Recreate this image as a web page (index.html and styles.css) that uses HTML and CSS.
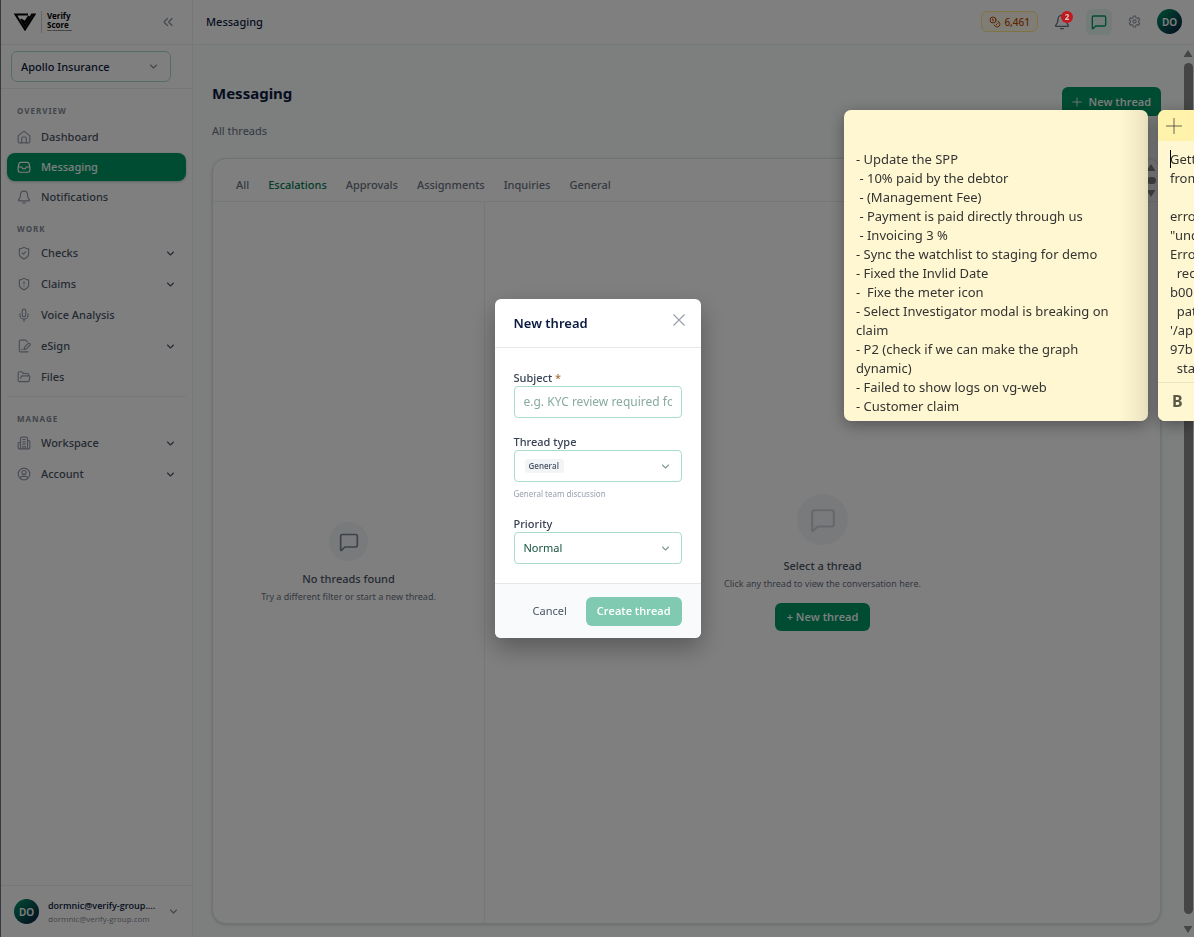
FILE: index.html
```
<!DOCTYPE html>
<html lang="en">
<head>
  <meta charset="UTF-8">
  <title>Messaging</title>
  <link rel="stylesheet" href="styles.css">
</head>
<body>
  <svg class="icon-defs" aria-hidden="true">
    <symbol id="i-down" viewBox="0 0 24 24"><path d="m4 8 8 8 8-8"/></symbol>
    <symbol id="i-chat" viewBox="0 0 24 24"><path d="M22 16a2 2 0 0 1-2 2H7l-4 4H2V5a2 2 0 0 1 2-2h16a2 2 0 0 1 2 2z"/></symbol>
    <symbol id="i-bell" viewBox="0 0 24 24"><path d="M6 8a6 6 0 0 1 12 0c0 6 2 7 3.500 9a1 1 0 0 1-.8 1.500H3.300A1 1 0 0 1 2.500 17C4 15 6 14 6 8M10 22h4"/></symbol>
    <symbol id="i-plus" viewBox="0 0 24 24"><path d="M12 2v20M2 12h20"/></symbol>
  </svg>

  <div class="app">
    <aside class="sidebar">
      <div class="brand">
        <svg class="brand-mark" viewBox="0 0 22 18"><path d="M14 1.500H1.500L11 16.500 20.500 1.500H18L11 12.500 7 6"/><path d="m8 7 3 2 4-6"/></svg>
        <div class="brand-name"><span>Verify</span><span>Score</span><small>Your Verification Partner</small></div>
        <button class="collapse" aria-label="Collapse sidebar"><svg class="icon" viewBox="0 0 24 24"><path d="m11 18-6-6 6-6M19 18l-6-6 6-6"/></svg></button>
      </div>

      <div class="org">
        <button class="org-select">Apollo Insurance <svg class="icon chev"><use href="#i-down"/></svg></button>
      </div>

      <nav class="nav">
        <div class="nav-group">
          <div class="nav-title">OVERVIEW</div>
          <a class="nav-item" href="#"><svg class="icon" viewBox="0 0 24 24"><path d="M2 10l10-8 10 8v10a2 2 0 0 1-2 2H4a2 2 0 0 1-2-2zM8 22v-8a2 2 0 0 1 2-2h4a2 2 0 0 1 2 2v8"/></svg>Dashboard</a>
          <a class="nav-item active" href="#"><svg class="icon" viewBox="0 0 24 24"><path d="M22 12h-6l-2 3h-4l-2-3H2M6 4h12a3 3 0 0 1 2.500 2L22 12v6a3 3 0 0 1-3 3H5a3 3 0 0 1-3-3v-6l1.500-6A3 3 0 0 1 6 4z"/></svg>Messaging</a>
          <a class="nav-item" href="#"><svg class="icon"><use href="#i-bell"/></svg>Notifications</a>
        </div>
        <div class="nav-group work">
          <div class="nav-title">WORK</div>
          <a class="nav-item" href="#"><svg class="icon" viewBox="0 0 24 24"><path d="M12 2c2.500 2 5 3 8 3v8c0 5-3.500 7.500-8 9-4.500-1.500-8-4-8-9V5c3 0 5.500-1 8-3zM9 12l2 2 4-4"/></svg>Checks <svg class="icon chev"><use href="#i-down"/></svg></a>
          <a class="nav-item" href="#"><svg class="icon" viewBox="0 0 24 24"><path d="M12 2c2.500 2 5 3 8 3v8c0 5-3.500 7.500-8 9-4.500-1.500-8-4-8-9V5c3 0 5.500-1 8-3zM12 8v4M12 16v.1"/></svg>Claims <svg class="icon chev"><use href="#i-down"/></svg></a>
          <a class="nav-item" href="#"><svg class="icon" viewBox="0 0 24 24"><rect x="9" y="2" width="6" height="13" rx="3"/><path d="M5 10v2a7 7 0 0 0 14 0v-2M12 19v4"/></svg>Voice Analysis</a>
          <a class="nav-item" href="#"><svg class="icon" viewBox="0 0 24 24"><path d="M18 5l-3-3H6a2 2 0 0 0-2 2v16a2 2 0 0 0 2 2h13M8 18h1M12 18l1-4 6-6a2 2 0 0 1 3 3l-6 6z"/></svg>eSign <svg class="icon chev"><use href="#i-down"/></svg></a>
          <a class="nav-item" href="#"><svg class="icon" viewBox="0 0 24 24"><path d="M6 14l1.500-3A2 2 0 0 1 9 10h12a2 2 0 0 1 1 2l-1 6a2 2 0 0 1-2 2H4a2 2 0 0 1-2-2V5a2 2 0 0 1 2-2h4l3 3h7a2 2 0 0 1 2 2v2"/></svg>Files</a>
        </div>
        <div class="nav-group manage">
          <div class="nav-title">MANAGE</div>
          <a class="nav-item" href="#"><svg class="icon" viewBox="0 0 24 24"><path d="M6 22V4a2 2 0 0 1 2-2h8a2 2 0 0 1 2 2v18zM6 11H4a2 2 0 0 0-2 2v7a2 2 0 0 0 2 2h2M18 8h2a2 2 0 0 1 2 2v10a2 2 0 0 1-2 2h-2M10 6h4M10 10h4M10 14h4M10 22v-4h4v4"/></svg>Workspace <svg class="icon chev"><use href="#i-down"/></svg></a>
          <a class="nav-item" href="#"><svg class="icon" viewBox="0 0 24 24"><circle cx="12" cy="12" r="10"/><circle cx="12" cy="9.500" r="3.500"/><path d="M6 20v-1a3 3 0 0 1 3-3h6a3 3 0 0 1 3 3v1"/></svg>Account <svg class="icon chev"><use href="#i-down"/></svg></a>
        </div>
      </nav>

      <button class="user">
        <span class="avatar">DO</span>
        <span class="user-text"><strong>dormnic@verify-group....</strong><small>dormnic@verify-group.com</small></span>
        <svg class="icon chev"><use href="#i-down"/></svg>
      </button>
    </aside>

    <div class="content">
      <header class="topbar">
        <span class="crumb">Messaging</span>
        <a class="credits" href="#"><svg class="icon" viewBox="0 0 24 24"><circle cx="8" cy="8" r="6"/><path d="M18 10.400A6 6 0 1 1 10.300 18M7 6h1v4M16.700 13.900l.7.700-2.800 2.800"/></svg>6,461</a>
        <button class="tool bell" aria-label="Notifications"><svg class="icon"><use href="#i-bell"/></svg><span class="badge">2</span></button>
        <button class="tool current" aria-label="Messages"><svg class="icon"><use href="#i-chat"/></svg></button>
        <button class="tool gear" aria-label="Settings"><svg class="icon" viewBox="0 0 24 24"><path d="M10 2h4l.7 3 2 1.200 3-.9 2 3.500-2.300 2.100v2.200l2.300 2.100-2 3.500-3-.9-2 1.200-.7 3h-4l-.7-3-2-1.200-3 .9-2-3.500 2.300-2.100v-2.200L2.300 8.800l2-3.500 3 .9 2-1.200z"/><circle cx="12" cy="12" r="3"/></svg></button>
        <span class="avatar">DO</span>
      </header>

      <div class="page">
        <main class="main">
          <div class="page-head">
            <h1>Messaging</h1>
            <button class="btn primary"><svg class="icon"><use href="#i-plus"/></svg>New thread</button>
          </div>
          <p class="subtitle">All threads</p>

          <section class="card">
            <div class="tabs">
              <a href="#">All</a>
              <a class="selected" href="#">Escalations</a>
              <a href="#">Approvals</a>
              <a href="#">Assignments</a>
              <a href="#">Inquiries</a>
              <a href="#">General</a>
              <div class="scrollbar mini"><i class="up"></i><i class="thumb"></i><i class="down"></i></div>
            </div>
            <div class="panes">
              <div class="pane list">
                <div class="bubble"><svg class="icon"><use href="#i-chat"/></svg></div>
                <h2>No threads found</h2>
                <p>Try a different filter or start a new thread.</p>
              </div>
              <div class="pane detail">
                <div class="bubble"><svg class="icon"><use href="#i-chat"/></svg></div>
                <h2>Select a thread</h2>
                <p>Click any thread to view the conversation here.</p>
                <button class="btn primary">+ New thread</button>
              </div>
            </div>
          </section>
        </main>
        <div class="scrollbar"><i class="up"></i><i class="thumb"></i><i class="down"></i></div>
      </div>
    </div>
  </div>

  <div class="overlay">
    <form class="modal" role="dialog" aria-labelledby="modal-title">
      <div class="modal-head">
        <h2 id="modal-title">New thread</h2>
        <button type="button" class="close" aria-label="Close"><svg class="icon" viewBox="0 0 24 24"><path d="M3 3l18 18M21 3L3 21"/></svg></button>
      </div>
      <div class="modal-body">
        <div class="field">
          <label for="subject">Subject <span class="req">*</span></label>
          <div class="control"><input type="text" id="subject" placeholder="e.g. KYC review required for"></div>
        </div>
        <div class="field">
          <label for="type">Thread type</label>
          <div class="control"><select class="pill" id="type"><option>General</option></select><svg class="icon chev"><use href="#i-down"/></svg></div>
          <p class="hint">General team discussion</p>
        </div>
        <div class="field">
          <label for="priority">Priority</label>
          <div class="control"><select id="priority"><option>Normal</option></select><svg class="icon chev"><use href="#i-down"/></svg></div>
        </div>
      </div>
      <div class="modal-foot">
        <button type="button" class="btn plain">Cancel</button>
        <button type="submit" class="btn primary" disabled>Create thread</button>
      </div>
    </form>
  </div>

  <article class="note first">
    <div class="note-text">- Update the SPP
 - 10% paid by the debtor
 - (Management Fee)
 - Payment is paid directly through us
 - Invoicing 3 %
- Sync the watchlist to staging for demo
- Fixed the Invlid Date
-  Fixe the meter icon
- Select Investigator modal is breaking on
claim
- P2 (check if we can make the graph
dynamic)
- Failed to show logs on vg-web
- Customer claim</div>
  </article>
  <article class="note second">
    <div class="note-bar"><button aria-label="New note"><svg class="icon"><use href="#i-plus"/></svg></button></div>
    <div class="note-text"><span class="caret"></span>Gett
from

erro
"und
Erro
  rec
b00
  pat
'/ap
97b
  sta</div>
    <div class="note-tools"><button aria-label="Bold">B</button></div>
  </article>
</body>
</html>
```
FILE: styles.css
```
:root {
    --green: #009966;
    --navy: #0b1b3f;
    --text: #4a5565;
    --muted: #838b98;
    --line: #eceef0;
    --mint: #a9dcc8;
}

* {
    box-sizing: border-box;
}

body {
    margin: 0;
    height: 100vh;
    overflow: hidden;
    font-family: "Noto Sans", "Open Sans", sans-serif;
    font-size: 11px;
    line-height: 16px;
    color: var(--text);
}

h1, h2, p {
    margin: 0;
}

a {
    color: inherit;
    text-decoration: none;
}

button, input, select {
    font: inherit;
    color: inherit;
    border: none;
    background: none;
    padding: 0;
}

.icon-defs {
    display: none;
}

.icon {
    width: 14px;
    height: 14px;
    flex: none;
    fill: none;
    stroke: currentColor;
    stroke-width: 2;
    stroke-linecap: round;
    stroke-linejoin: round;
}

.chev {
    width: 9px;
    height: 9px;
    margin-left: auto;
    stroke-width: 3;
}

.app {
    display: flex;
    height: 100vh;
    border-left: 1px solid #6f7480;
    background: #fafcfc;
}

/* Sidebar */
.sidebar {
    width: 192px;
    flex: none;
    display: flex;
    flex-direction: column;
    background: #fff;
    border-right: 1px solid var(--line);
}

.brand {
    display: flex;
    align-items: center;
    height: 45px;
    padding: 0 17px 1px 13px;
    border-bottom: 1px solid var(--line);
}

.brand-mark {
    width: 22px;
    height: 18px;
    fill: none;
    stroke: #000;
    stroke-width: 2;
}

.brand-name {
    margin-left: 5px;
    padding-left: 5px;
    border-left: 1px solid #ccc;
    color: #000;
    font-size: 8px;
    font-weight: 700;
    line-height: 9px;
}

.brand-name span, .brand-name small {
    display: block;
}

.brand-name small {
    font-size: 2px;
    line-height: 4px;
}

.collapse {
    display: flex;
    margin-left: auto;
    color: #838b98;
}

.org {
    padding: 6px 21px 6px 10px;
    border-bottom: 1px solid var(--line);
}

.org-select {
    display: flex;
    align-items: center;
    width: 100%;
    height: 31px;
    padding: 0 12px 0 9px;
    border: 1px solid var(--mint);
    border-radius: 6px;
    color: var(--navy);
    font-weight: 500;
}

.org-select .chev {
    color: #838b98;
}

.nav {
    flex: 1;
    padding: 14px 6px;
}

.nav-group {
    display: flex;
    flex-direction: column;
    gap: 2px;
}

.nav-title {
    padding: 0 10px;
    margin-bottom: 2px;
    color: var(--muted);
    font-size: 8px;
    font-weight: 700;
    letter-spacing: 1px;
}

.nav-item {
    display: flex;
    align-items: center;
    gap: 10px;
    height: 28px;
    padding: 0 11px 0 10px;
    border-radius: 8px;
    font-weight: 500;
}

.nav-item .icon:first-child {
    color: #959ca8;
}

.nav-item.active {
    background: var(--green);
    color: #fff;
    box-shadow: 0 1px 3px rgba(0, 80, 50, .3);
}

.nav-item.active .icon:first-child {
    color: #fff;
}

.work, .manage {
    gap: 3px;
}

.work {
    padding: 10px 0 5px;
}

.work .nav-title, .manage .nav-title {
    margin-bottom: -1px;
}

.manage {
    padding-top: 14px;
    border-top: 1px solid var(--line);
}

.user {
    display: flex;
    align-items: center;
    gap: 9px;
    height: 52px;
    padding: 0 14px 0 13px;
    border-top: 1px solid var(--line);
    text-align: left;
}

.avatar {
    display: flex;
    align-items: center;
    justify-content: center;
    width: 25px;
    height: 25px;
    flex: none;
    border-radius: 50%;
    background: linear-gradient(135deg, #009966, #0a1640);
    color: #fff;
    font-size: 10px;
    font-weight: 600;
}

.user-text {
    flex: 1;
    font-family: "Open Sans", sans-serif;
    white-space: nowrap;
}

.user-text strong, .user-text small {
    display: block;
}

.user-text strong {
    color: var(--navy);
    font-size: 9px;
    font-weight: 600;
    line-height: 14px;
}

.user-text small {
    color: var(--muted);
    font-size: 8px;
    line-height: 11px;
}

.user .chev {
    color: var(--muted);
}

/* Top bar */
.content {
    flex: 1;
    min-width: 0;
    display: flex;
    flex-direction: column;
}

.topbar {
    display: flex;
    align-items: center;
    height: 45px;
    padding: 0 12px 1px 13px;
    background: #fff;
    border-bottom: 1px solid var(--line);
}

.crumb {
    margin-right: auto;
    color: var(--navy);
    font-weight: 500;
}

.credits {
    display: flex;
    align-items: center;
    gap: 3px;
    height: 21px;
    padding: 0 7px;
    margin-right: 11px;
    border: 1px solid #fee685;
    border-radius: 6px;
    background: #fffbeb;
    color: #bb4d00;
    font-size: 10px;
    font-weight: 500;
}

.credits .icon {
    width: 12px;
    height: 12px;
}

.tool {
    position: relative;
    display: flex;
    align-items: center;
    justify-content: center;
    width: 26px;
    height: 26px;
    margin-right: 11px;
    border-radius: 6px;
    color: #6a7282;
}

.tool .icon {
    width: 16px;
    height: 16px;
}

.tool.current {
    margin-right: 9px;
    background: #e6f8f0;
    color: var(--green);
}

.tool.gear {
    margin-right: 10px;
    color: #959ca8;
}

.tool.gear .icon {
    width: 13px;
    height: 13px;
}

.badge {
    position: absolute;
    top: 2px;
    right: 2px;
    z-index: 20;
    width: 12px;
    height: 12px;
    border-radius: 50%;
    background: #c4181f;
    color: #ccc;
    font-size: 8px;
    font-weight: 700;
    line-height: 12px;
    text-align: center;
}

/* Page */
.page {
    flex: 1;
    min-height: 0;
    display: flex;
}

.main {
    flex: 1;
    min-width: 0;
    display: flex;
    flex-direction: column;
    padding: 36px 21px 13px 19px;
}

.page-head {
    display: flex;
    justify-content: space-between;
}

h1 {
    color: var(--navy);
    font-size: 15px;
    line-height: 24px;
}

.btn {
    display: flex;
    align-items: center;
    justify-content: center;
    gap: 7px;
    height: 29px;
    padding: 0 11px;
    border-radius: 6px;
}

.btn.primary {
    background: var(--green);
    color: #fff;
    font-family: "Open Sans", sans-serif;
    font-weight: 600;
}

.page-head .btn {
    margin-top: 6px;
    padding: 0 10px;
}

.page-head .icon {
    width: 10px;
    height: 10px;
}

.subtitle {
    margin: 7px 0 19px;
    color: #6a7282;
}

.card {
    flex: 1;
    display: flex;
    flex-direction: column;
    border: 1px solid #dfe3e6;
    border-radius: 14px;
    background: #fff;
    box-shadow: 0 1px 3px rgba(0, 0, 0, .15);
}

.tabs {
    display: flex;
    align-items: center;
    gap: 19px;
    height: 43px;
    padding: 9px 3px 0 23px;
    border-bottom: 1px solid var(--line);
    color: #6a7282;
    font-weight: 500;
}

.tabs .selected {
    color: #007a55;
}

.panes {
    flex: 1;
    display: flex;
}

.pane {
    display: flex;
    flex-direction: column;
    align-items: center;
    justify-content: center;
}

.pane h2 {
    font-size: 11px;
    font-weight: 500;
    line-height: 18px;
}

.pane p {
    color: #6a7282;
    font-size: 9px;
    line-height: 17px;
}

.list {
    width: 272px;
    padding-top: 2px;
    border-right: 1px solid var(--line);
}

.detail {
    flex: 1;
}

.bubble {
    display: flex;
    align-items: center;
    justify-content: center;
    width: 39px;
    height: 39px;
    margin-bottom: 9px;
    border-radius: 50%;
    background: #f1f4f8;
}

.bubble .icon {
    width: 20px;
    height: 20px;
    color: #7b8391;
}

.detail .bubble {
    width: 51px;
    height: 51px;
    margin-bottom: 12px;
}

.detail .bubble .icon {
    width: 26px;
    height: 26px;
    color: #cdd1d7;
}

.pane .btn {
    height: 28px;
    padding: 0 12px;
    margin-top: 11px;
}

/* Scrollbars */
.scrollbar {
    display: flex;
    flex-direction: column;
    align-items: center;
    gap: 6px;
    width: 12px;
    padding: 5px 1px 4px;
}

.scrollbar .thumb {
    flex: 1;
    width: 9px;
    border-radius: 5px;
    background: #8a8a8a;
}

.scrollbar .up, .scrollbar .down {
    width: 9px;
    height: 7px;
    background: #8a8a8a;
    clip-path: polygon(50% 0, 100% 100%, 0 100%);
}

.scrollbar .down {
    margin-top: 6px;
    clip-path: polygon(0 0, 100% 0, 50% 100%);
}

.scrollbar.mini {
    align-self: flex-start;
    height: 33px;
    margin: -4px 0 0 auto;
    padding: 0;
}

.scrollbar.mini .down {
    margin-top: 0;
}

/* Modal */
.overlay {
    position: fixed;
    inset: 0;
    z-index: 10;
    display: flex;
    align-items: center;
    justify-content: center;
    padding-left: 1px;
    background: rgba(0, 0, 0, .5);
}

.modal {
    width: 206px;
    overflow: hidden;
    border-radius: 6px;
    background: #fff;
    box-shadow: 0 10px 24px rgba(0, 0, 0, .3);
}

.modal-head {
    display: flex;
    align-items: center;
    justify-content: space-between;
    height: 49px;
    padding: 0 15px 0 19px;
    border-bottom: 1px solid #e5e7eb;
}

.modal-head h2 {
    color: var(--navy);
    font-size: 13px;
    font-weight: 600;
}

.close {
    display: flex;
    margin-bottom: 6px;
    color: #9aa1ae;
}

.modal-body {
    padding: 22px 19px 19px;
}

.field {
    margin-bottom: 16px;
}

.field:last-child {
    margin-bottom: 0;
}

.field label {
    display: block;
    color: #364153;
    font-weight: 500;
}

.req {
    color: #a0703c;
}

.control {
    display: flex;
    align-items: center;
    height: 32px;
    padding: 0 9px;
    border: 1px solid var(--mint);
    border-radius: 4px;
}

.control input, .control select {
    width: 100%;
    min-width: 0;
    color: #14523f;
    outline: none;
}

.control input {
    font-size: 12px;
}

.control input::placeholder {
    color: #88aa9e;
}

.control select {
    appearance: none;
}

.control .chev {
    margin-right: 2px;
    color: #7f9c92;
}

.control .pill {
    width: auto;
    padding: 0 4px;
    margin-left: 1px;
    border-radius: 3px;
    background: #f3f4f6;
    color: #4a5565;
    font-family: "Open Sans", sans-serif;
    font-size: 8px;
    font-weight: 600;
    line-height: 14px;
}

.hint {
    margin-top: 5px;
    color: #99a1af;
    font-size: 8px;
    line-height: 13px;
}

.modal-foot {
    display: flex;
    align-items: center;
    justify-content: flex-end;
    gap: 8px;
    height: 55px;
    padding: 0 19px;
    border-top: 1px solid #e5e7eb;
    background: #f9fafb;
}

.btn:disabled {
    background: #7fcab0;
}

/* Sticky notes */
.note {
    position: fixed;
    top: 110px;
    z-index: 30;
    display: flex;
    flex-direction: column;
    height: 311px;
    overflow: hidden;
    border-radius: 7px;
    background: #fff7d1;
    color: #333;
    font-size: 13px;
    line-height: 19px;
    box-shadow: 0 4px 16px rgba(0, 0, 0, .35);
}

.note.first {
    right: 46px;
    width: 304px;
    padding-top: 31px;
    background: linear-gradient(to left, #ebe3c0, #fff7d1 28px);
}

.note.second {
    right: 0;
    width: 36px;
    border-radius: 7px 0 0 7px;
}

.note-bar {
    height: 31px;
    padding: 7px;
    background: #fff2ab;
}

.note-bar .icon {
    width: 18px;
    height: 18px;
    stroke-width: 1;
}

.note-text {
    flex: 1;
    padding: 9px 0 0 12px;
    white-space: pre;
}

.caret {
    float: left;
    width: 1px;
    height: 18px;
    margin-right: -1px;
    background: #000;
}

.note-tools {
    height: 39px;
    padding: 9px 14px;
    border-top: 1px solid #ebe4c0;
    background: #fff7d1;
}

.note-tools button {
    font-size: 16px;
    font-weight: 700;
    color: #5c5847;
}
```
